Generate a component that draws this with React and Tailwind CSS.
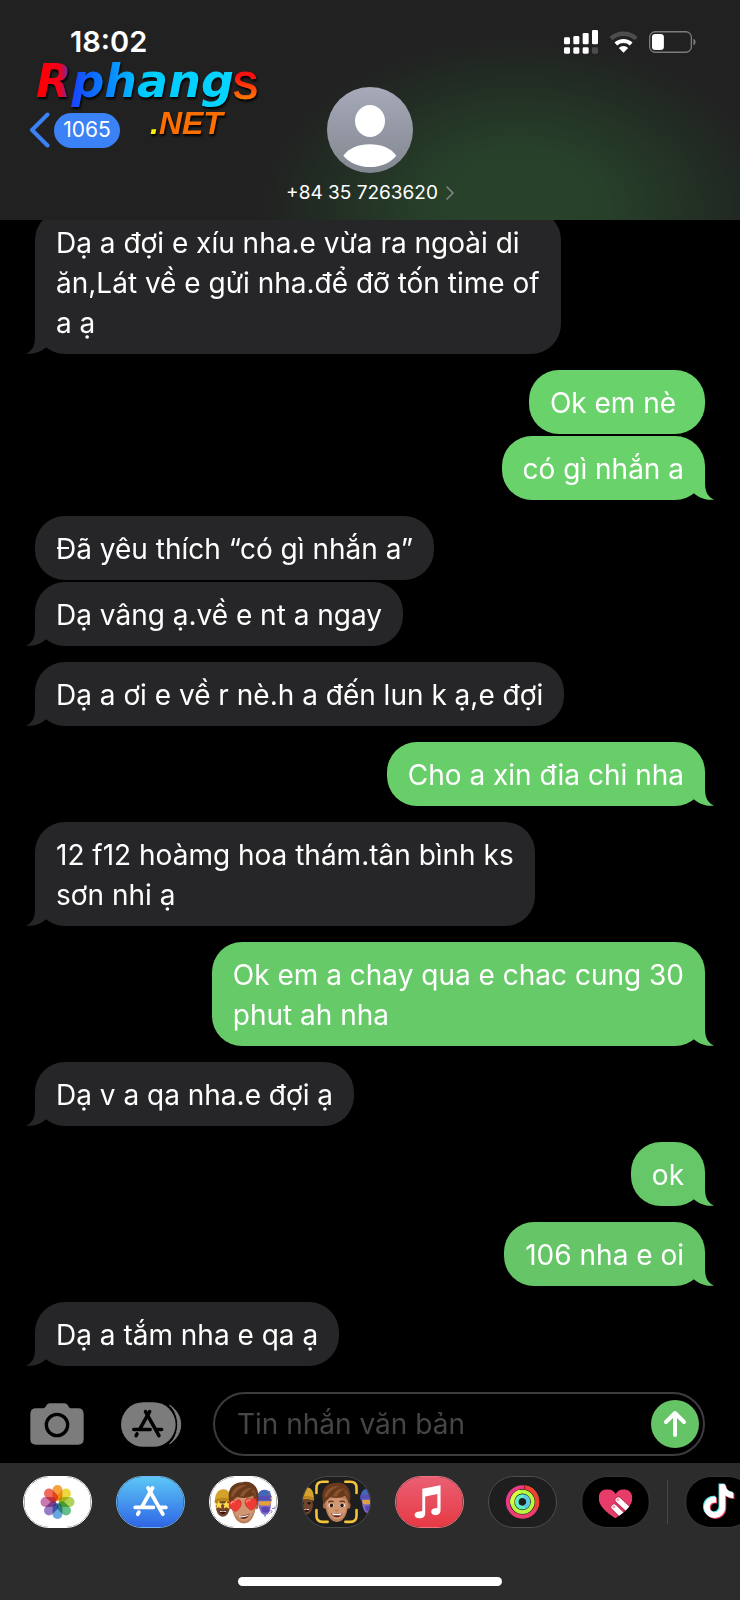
import React from "react";

const messages = [
  { from: "them", tail: true, text: "Dạ a đợi e xíu nha.e vừa ra ngoài di\năn,Lát về e gửi nha.để đỡ tốn time of\na ạ" },
  { from: "me", color: "#6ad26b", text: "Ok em nè " },
  { from: "me", color: "#6ad26b", tail: true, grouped: true, text: "có gì nhắn a" },
  { from: "them", text: "Đã yêu thích “có gì nhắn a”" },
  { from: "them", tail: true, grouped: true, text: "Dạ vâng ạ.về e nt a ngay" },
  { from: "them", tail: true, text: "Dạ a ơi e về r nè.h a đến lun k ạ,e đợi" },
  { from: "me", color: "#68ce6a", tail: true, text: "Cho a xin đia chi nha" },
  { from: "them", tail: true, text: "12 f12 hoàmg hoa thám.tân bình ks\nsơn nhi ạ" },
  { from: "me", color: "#67ca68", tail: true, text: "Ok em a chay qua e chac cung 30\nphut ah nha" },
  { from: "them", tail: true, text: "Dạ v a qa nha.e đợi ạ" },
  { from: "me", color: "#66c768", tail: true, text: "ok" },
  { from: "me", color: "#66c667", tail: true, text: "106 nha e oi" },
  { from: "them", tail: true, text: "Dạ a tắm nha e qa ạ" },
];

function Tail({ mine, color }) {
  return (
    <svg
      viewBox="0 0 30 30"
      className={
        mine
          ? "absolute bottom-0 -right-[9px] w-[30px] h-[30px] -scale-x-100"
          : "absolute bottom-0 -left-[9px] w-[30px] h-[30px]"
      }
      aria-hidden="true"
    >
      <path d="M9 0 V13 C9 22 6 27 0 29.500 C8 31 16 27 20.500 23 L30 10 V0 Z" fill={color} />
    </svg>
  );
}

function Bubble({ from, text, tail, grouped, color = "#262628" }) {
  const mine = from === "me";
  return (
    <li className={(mine ? "flex justify-end " : "flex justify-start ") + (grouped ? "mt-0.5" : "mt-4 first:mt-0")}>
      <div
        className="relative rounded-[30px] px-[21px] pt-[13px] pb-[11px] text-[28px] leading-10 text-white whitespace-pre"
        style={{ backgroundColor: color }}
      >
        {tail && <Tail mine={mine} color={color} />}
        <p className="relative">{text}</p>
      </div>
    </li>
  );
}

function StatusIcons() {
  return (
    <div className="flex items-center gap-[11px]">
      <svg viewBox="0 0 102 72" className="w-[34px] h-6" aria-label="Signal">
        <g fill="#fff">
          <rect x="0" y="22" width="18" height="21" rx="4" />
          <rect x="28" y="18" width="18" height="25" rx="4" />
          <rect x="56" y="9" width="18" height="34" rx="4" />
          <rect x="84" y="0" width="18" height="43" rx="4" />
          <rect x="0" y="52" width="18" height="19" rx="4" />
          <rect x="28" y="52" width="18" height="19" rx="4" />
          <rect x="56" y="52" width="18" height="19" rx="4" />
        </g>
        <rect x="84" y="52" width="18" height="19" rx="4" fill="#4d4d4d" />
      </svg>
      <svg viewBox="0 0 86 66" className="w-[29px] h-[22px]" fill="none" aria-label="Wi-Fi">
        <path d="M5 23 A56 56 0 0 1 81 23" stroke="#4d4d4d" strokeWidth="13" />
        <path d="M20 39 A34 34 0 0 1 66 39" stroke="#fff" strokeWidth="12" />
        <path d="M43 65 L29 51 A20 20 0 0 1 57 51 Z" fill="#fff" />
      </svg>
      <svg viewBox="0 0 142 66" className="w-[47px] h-[22px]" aria-label="Battery">
        <rect x="2" y="2" width="126" height="62" rx="17" fill="none" stroke="#7c7c7c" strokeWidth="4" />
        <rect x="9" y="9" width="36" height="48" rx="10" fill="#fff" />
        <path d="M134 23 C143 26 143 40 134 43 Z" fill="#7c7c7c" />
      </svg>
    </div>
  );
}

function SiteLogo() {
  return (
    <svg viewBox="0 0 230 84" className="absolute left-9 top-14 w-[230px] h-[84px] overflow-visible" aria-label="Rphangs.NET">
      <defs>
        <linearGradient id="logoWord" x1="0" x2="198" y1="0" y2="0" gradientUnits="userSpaceOnUse">
          <stop offset="0" stopColor="#ff0000" />
          <stop offset="0.12" stopColor="#f5001a" />
          <stop offset="0.19" stopColor="#1747ff" />
          <stop offset="0.35" stopColor="#0a80ff" />
          <stop offset="0.55" stopColor="#00ccff" />
          <stop offset="1" stopColor="#05d5ff" />
        </linearGradient>
        <linearGradient id="logoS" x1="0" x2="0" y1="14" y2="46" gradientUnits="userSpaceOnUse">
          <stop offset="0.2" stopColor="#ff1010" />
          <stop offset="1" stopColor="#ff8800" />
        </linearGradient>
      </defs>
      <g style={{ filter: "drop-shadow(1px 2px 1px #000)" }}>
        <text x="0" y="41" fontFamily="DejaVu Sans" fontWeight="700" fontStyle="italic" fontSize="46" fill="url(#logoWord)">
          Rphang
        </text>
        <text x="197" y="43" fontFamily="Liberation Sans" fontSize="50" fill="url(#logoS)" stroke="url(#logoS)">
          s
        </text>
        <text x="114" y="78" fontFamily="Liberation Sans" fontWeight="700" fontStyle="italic" fontSize="32" fill="#ff6f00">
          <tspan fill="#ffee00">.</tspan>NET
        </text>
      </g>
    </svg>
  );
}

function Header() {
  return (
    <header className="relative z-10 bg-[#212121] bg-[radial-gradient(ellipse_260px_170px_at_70%_94%,#28422a_0%,#27402a_35%,#222e24_72%,#212121_100%)]">
      <div className="flex h-[60px] items-center justify-between pl-[70px] pr-11 pt-6">
        <time className="text-[29px] leading-9 font-semibold">18:02</time>
        <StatusIcons />
      </div>
      <div className="grid grid-cols-[1fr_auto_1fr] pt-[27px]">
        <button className="flex h-[86px] items-center gap-1 justify-self-start pl-[29px]" aria-label="Back, 1065 unread">
          <svg viewBox="0 0 21 36" className="w-[21px] h-9" fill="none" stroke="#3b82f7" strokeWidth="4" strokeLinecap="round" strokeLinejoin="round">
            <path d="M18.500 2.500 L3 18 L18.500 33.500" />
          </svg>
          <span className="flex h-[35px] w-[66px] items-center justify-center rounded-full bg-[#3b82f7] text-[21px]">1065</span>
        </button>
        <svg viewBox="0 0 258 258" className="w-[86px] h-[86px] justify-self-center" aria-hidden="true">
          <defs>
            <linearGradient id="avatarBg" x1="0" x2="0" y1="0" y2="1">
              <stop offset="0" stopColor="#a6aab9" />
              <stop offset="1" stopColor="#838790" />
            </linearGradient>
          </defs>
          <circle cx="129" cy="129" r="129" fill="url(#avatarBg)" />
          <ellipse cx="129" cy="102" rx="45" ry="48" fill="#fff" />
          <path d="M49 206 C66 183 95 172 129 172 C163 172 191 183 208 206 C190 227 163 240 129 240 C95 240 67 227 49 206 Z" fill="#fff" />
        </svg>
        <button className="col-span-3 mt-1.5 flex h-7 items-center justify-center gap-2 justify-self-center text-[19px] leading-7">
          +84 35 7263620
          <svg viewBox="0 0 8 14" className="w-2 h-3.5" fill="none" stroke="#85898f" strokeWidth="1.500" strokeLinecap="round">
            <path d="M1 1 L7 7 L1 13" />
          </svg>
        </button>
      </div>
      <div className="h-[13px]" />
      <SiteLogo />
    </header>
  );
}

function AppStoreStrokes({ color, transform }) {
  return (
    <g stroke={color} strokeWidth="12" strokeLinecap="round" fill="none" transform={transform}>
      <path d="M60 5 L28 62" />
      <path d="M17 81 L14 87" />
      <path d="M46 5 L92 87" />
      <path d="M6 66 H62" />
      <path d="M85 66 H101" />
    </g>
  );
}

const petals = ["#f79a2c", "#ecd52f", "#a8ce4b", "#59b87f", "#5a9fdc", "#8f72c1", "#c56da9", "#ec5f50"];

function PhotosIcon() {
  return (
    <svg viewBox="0 0 207 156" className="h-full w-full">
      <rect width="207" height="156" fill="#fff" />
      <g style={{ isolation: "isolate" }}>
        {petals.map((fill, i) => (
          <rect
            key={fill}
            x="88"
            y="25"
            width="31"
            height="49"
            rx="15.500"
            fill={fill}
            fillOpacity="0.92"
            transform={`rotate(${i * 45} 103.500 78)`}
            style={{ mixBlendMode: "multiply" }}
          />
        ))}
      </g>
    </svg>
  );
}

function StoreIcon() {
  return (
    <svg viewBox="0 0 207 156" className="h-full w-full">
      <defs>
        <linearGradient id="storeBg" x1="0" x2="0" y1="0" y2="1">
          <stop offset="0" stopColor="#5cc6f5" />
          <stop offset="1" stopColor="#2f66e6" />
        </linearGradient>
      </defs>
      <rect width="207" height="156" fill="url(#storeBg)" />
      <AppStoreStrokes color="#fff" transform="translate(50 29)" />
    </svg>
  );
}

function HatHead({ transform, stars }) {
  return (
    <g transform={transform}>
      <ellipse cx="26" cy="54" rx="22" ry="32" fill="#70452c" />
      <path d="M1 44 C0 12 12 0 28 0 C44 0 52 14 51 42 C34 34 16 36 1 44 Z" fill="#d5a32c" />
      <path d="M1 44 C14 34 38 32 51 42 L51 32 C36 24 14 26 1 34 Z" fill="#b98519" />
      {stars ? (
        <g fill="#ffd84a">
          <path d="M13 36 l4 8 9 1 -6 6 2 9 -9 -4 -8 4 2 -9 -6 -6 8 -1 Z" />
          <path d="M37 36 l4 8 9 1 -6 6 2 9 -9 -4 -8 4 2 -9 -6 -6 8 -1 Z" />
        </g>
      ) : (
        <g fill="#1d130e">
          <ellipse cx="15" cy="50" rx="5" ry="4" />
          <ellipse cx="36" cy="50" rx="5" ry="4" />
        </g>
      )}
      <path d="M14 66 C22 69 32 69 38 66 C36 82 17 82 14 66 Z" fill="#3b130e" />
      <path d="M16 67 C24 70 30 70 37 67 L35 71 H18 Z" fill="#fff" />
    </g>
  );
}

function WizardHead({ transform }) {
  return (
    <g transform={transform}>
      <path d="M3 30 C6 64 14 78 26 78 C38 78 45 62 45 30 Z" fill="#7c68c8" />
      <path d="M0 34 C0 10 10 0 24 0 C40 0 46 12 47 34 Z" fill="#4466b6" />
      <path d="M0 20 H46 V32 H0 Z" fill="#5b4bb5" />
      <path d="M5 36 H45 L42 49 H9 Z" fill="#e4a03b" />
      <path d="M14 56 C22 52 32 52 40 56 L38 70 H18 Z" fill="#5c45ae" />
    </g>
  );
}

function BoyHead({ hearts }) {
  return (
    <g>
      <ellipse cx="65" cy="90" rx="6" ry="11" fill="#b06a49" />
      <ellipse cx="144" cy="90" rx="6" ry="11" fill="#b06a49" />
      <path d="M65 60 C63 104 76 145 105 145 C134 145 145 104 143 60 C140 34 68 34 65 60 Z" fill="#bd7f5a" />
      <path d="M71 78 C70 110 83 136 105 137 C127 136 138 110 137 78 C130 60 80 60 71 78 Z" fill="#d19770" />
      <path d="M62 86 C48 46 64 16 100 16 C138 8 160 42 146 88 C143 76 138 66 132 58 C118 66 100 68 84 62 C74 68 68 76 62 86 Z" fill="#69391b" />
      <path d="M64 62 C68 36 90 22 114 26 C96 32 80 44 72 62 Z M92 60 C98 44 112 32 130 34 C118 42 108 50 104 61 Z" fill="#89532f" />
      <path d="M134 36 C142 46 145 58 144 70 C140 58 134 50 128 46 Z" fill="#7d4926" />
      {hearts ? (
        <g>
          <path d="M86 122 C98 122 112 120 122 114 C122 132 92 136 86 122 Z" fill="#581715" />
          <path d="M88 122 C98 123 111 121 121 116 L119 121 C110 126 97 127 90 126 Z" fill="#fff" />
          <g fill="#ee3b35" stroke="#c72822" strokeWidth="1.500">
            <path d="M79 108 C64 101 56 89 61 78 C65 70 75 71 79 78 C83 69 93 69 96 77 C99 89 91 101 79 108 Z" />
            <path d="M128 104 C113 97 105 84 109 73 C113 64 123 66 127 73 C131 64 142 65 145 73 C147 85 140 96 128 104 Z" />
          </g>
          <path d="M65 83 C66 77 71 75 74 79 M113 78 C115 71 120 70 123 74" fill="none" stroke="#ff8f88" strokeWidth="4" strokeLinecap="round" />
        </g>
      ) : (
        <g>
          <path d="M76 80 C82 75 88 75 94 78 M114 78 C121 75 127 75 133 80" fill="none" stroke="#5d3219" strokeWidth="4" />
          <ellipse cx="86" cy="90" rx="9" ry="6" fill="#fff" />
          <ellipse cx="123" cy="90" rx="9" ry="6" fill="#fff" />
          <circle cx="87" cy="90" r="6" fill="#2b1a14" />
          <circle cx="122" cy="90" r="6" fill="#2b1a14" />
          <path d="M99 106 C103 109 107 109 111 106" fill="none" stroke="#a8653f" strokeWidth="3" />
          <path d="M86 115 C97 119 113 119 124 115 C120 134 90 134 86 115 Z" fill="#66211d" />
          <path d="M88 116 C98 119 112 119 122 116 L118 123 H92 Z" fill="#fff" />
        </g>
      )}
    </g>
  );
}

function StickersIcon() {
  return (
    <svg viewBox="0 0 207 156" className="h-full w-full">
      <rect width="207" height="156" fill="#fff" />
      <HatHead stars transform="translate(13 38)" />
      <WizardHead transform="translate(145 40)" />
      <path d="M184 108 C192 98 196 112 188 112 M192 98 H202 V92" fill="none" stroke="#8b6fd6" strokeWidth="3" />
      <g>
        <rect x="182" y="44" width="5" height="5" fill="#4a7bf0" />
        <rect x="188" y="64" width="6" height="6" fill="#ffd23d" />
        <rect x="180" y="52" width="4" height="4" fill="#ef5350" />
        <rect x="168" y="118" width="5" height="5" fill="#4a7bf0" />
        <rect x="182" y="112" width="4" height="4" fill="#ffb03d" />
      </g>
      <BoyHead hearts />
    </svg>
  );
}

function MemojiIcon() {
  return (
    <svg viewBox="0 0 207 156" className="h-full w-full">
      <rect width="207" height="156" fill="#1e1e1e" />
      <HatHead transform="translate(-18 32)" />
      <WizardHead transform="translate(178 36)" />
      <rect x="36" y="8" width="138" height="138" rx="20" fill="#1e1e1e" />
      <g transform="translate(6 4) scale(0.94)">
        <BoyHead />
      </g>
      <g fill="none" stroke="#f4c53b" strokeWidth="8" strokeLinecap="round">
        <path d="M41 50 V34 Q41 15 60 15 H76" />
        <path d="M131 15 H147 Q166 15 166 34 V50" />
        <path d="M41 103 V121 Q41 140 60 140 H76" />
        <path d="M131 140 H147 Q166 140 166 121 V103" />
      </g>
    </svg>
  );
}

function MusicIcon() {
  return (
    <svg viewBox="0 0 207 156" className="h-full w-full">
      <defs>
        <linearGradient id="musicBg" x1="0" x2="0" y1="0" y2="1">
          <stop offset="0" stopColor="#ea5f73" />
          <stop offset="1" stopColor="#e63a44" />
        </linearGradient>
      </defs>
      <rect width="207" height="156" fill="url(#musicBg)" />
      <path d="M81 37 L138 26 V104 C138 114 131 119 122 119 C113 119 108 114 109 108 C110 99 118 98 128 97 V53 L90 61 V114 C90 124 83 129 72 129 C62 129 57 124 57 118 C58 108 68 108 81 106 Z" fill="#fff" />
    </svg>
  );
}

function FitnessIcon() {
  return (
    <svg viewBox="0 0 207 156" className="h-full w-full">
      <rect width="207" height="156" fill="#1e1e1e" />
      <g fill="none" strokeWidth="12">
        <circle cx="103.500" cy="77.500" r="46" stroke="#e93a86" />
        <path d="M110 32 A46 46 0 0 1 144 100" stroke="#f0432f" />
        <path d="M144 100 A46 46 0 0 1 70 109" stroke="#ec3f6d" />
        <circle cx="103.500" cy="77.500" r="32" stroke="#b9f83f" />
        <path d="M72 84 A32 32 0 0 1 96 46" stroke="#d7ff45" />
        <circle cx="103.500" cy="77.500" r="18" stroke="#63eec8" />
        <path d="M108 60 A18 18 0 0 1 110 94" stroke="#5ac8e6" />
      </g>
      <path d="M110 25 V40" stroke="#a31d2c" strokeWidth="4" />
    </svg>
  );
}

function TouchIcon() {
  return (
    <svg viewBox="0 0 207 156" className="h-full w-full">
      <defs>
        <clipPath id="heartClip">
          <path d="M103 129 C70 106 51 88 51 66 C51 48 63 38 78 38 C90 38 99 44 104 53 C109 44 118 38 130 38 C145 38 156 49 156 66 C156 88 136 106 103 129 Z" />
        </clipPath>
      </defs>
      <rect width="207" height="156" fill="#000" />
      <g clipPath="url(#heartClip)">
        <rect x="45" y="30" width="120" height="105" fill="#e83c6b" />
        <g stroke="#b82a50" strokeWidth="22" strokeLinecap="round">
          <path d="M112 72 L158 114" />
          <path d="M99 94 L136 130" />
        </g>
        <g stroke="#fff" strokeWidth="17" strokeLinecap="round">
          <path d="M112 72 L158 114" />
          <path d="M99 94 L136 130" />
        </g>
        <circle cx="111" cy="71" r="5" fill="#f5a3b8" />
        <circle cx="98" cy="93" r="5" fill="#f5a3b8" />
      </g>
    </svg>
  );
}

const note =
  "M448 209.900a210.100 210.100 0 0 1-122.800-39.300v178.800A162.600 162.600 0 1 1 185 188.300v89.900a74.600 74.600 0 1 0 52.200 71.200V0h88a121.200 121.200 0 0 0 1.900 22.200 122.200 122.200 0 0 0 53.900 80.200 121.400 121.400 0 0 0 67 20.100z";

function TikTokIcon() {
  return (
    <svg viewBox="0 0 207 156" className="h-full w-full">
      <rect width="207" height="156" fill="#000" />
      <path d={note} fill="#5ce5e4" transform="translate(52 20) scale(0.205)" />
      <path d={note} fill="#ea3e62" transform="translate(58 26) scale(0.205)" />
      <path d={note} fill="#fff" transform="translate(55 23) scale(0.205)" />
    </svg>
  );
}

const apps = [
  { name: "Photos", Icon: PhotosIcon, border: "border-white" },
  { name: "App Store", Icon: StoreIcon, border: "border-[#6fb4ee]" },
  { name: "Memoji Stickers", Icon: StickersIcon, border: "border-white" },
  { name: "Memoji", Icon: MemojiIcon, border: "border-[#4a4a4a]" },
  { name: "Music", Icon: MusicIcon, border: "border-[#ec7480]" },
  { name: "Fitness", Icon: FitnessIcon, border: "border-[#4f4f4f]" },
  { name: "Digital Touch", Icon: TouchIcon, border: "border-[#363636]" },
];

function AppButton({ name, Icon, border }) {
  return (
    <button
      aria-label={name}
      className={"h-[52px] w-[69px] shrink-0 overflow-hidden rounded-[26px] border " + border}
    >
      <Icon />
    </button>
  );
}

function Composer() {
  return (
    <form className="flex items-center gap-[31px] pb-[7px] pl-[30px] pr-[35px] pt-[26px]" onSubmit={(e) => e.preventDefault()}>
      <button type="button" aria-label="Camera" className="w-[60px] shrink-0">
        <svg viewBox="0 0 162 126" className="w-[54px] h-[42px]">
          <path d="M18 16 H40 C48 16 48 1 60 1 H103 C115 1 115 16 122 16 H144 Q161 16 161 33 V109 Q161 125 144 125 H18 Q1 125 1 109 V33 Q1 16 18 16 Z" fill="#7c7c7c" />
          <circle cx="81" cy="66" r="32" fill="none" stroke="#000" strokeWidth="10" />
        </svg>
      </button>
      <button type="button" aria-label="Apps" className="shrink-0">
        <svg viewBox="0 0 183 134" className="w-[61px] h-[45px]">
          <path d="M146 9 C190 38 190 96 146 125 C178 96 178 38 146 9 Z" fill="#7c7c7c" stroke="#7c7c7c" strokeWidth="3" />
          <rect width="164" height="134" rx="67" fill="#7c7c7c" />
          <AppStoreStrokes color="#000" transform="translate(33 24) scale(0.88)" />
        </svg>
      </button>
      <div className="flex h-16 min-w-0 flex-1 items-center rounded-full border-2 border-[#3c3c3e] pl-[22px] pr-1">
        <input
          aria-label="Tin nhắn văn bản"
          placeholder="Tin nhắn văn bản"
          className="min-w-0 flex-1 bg-transparent text-[28px] leading-10 text-white outline-none placeholder:text-[#464648]"
        />
        <button aria-label="Send" className="flex h-12 w-12 shrink-0 items-center justify-center rounded-full bg-[#65c466]">
          <svg viewBox="0 0 24 28" className="w-6 h-7" fill="none" stroke="#fff" strokeWidth="4" strokeLinecap="round" strokeLinejoin="round">
            <path d="M12 25 V3 M3 12 L12 3 L21 12" />
          </svg>
        </button>
      </div>
    </form>
  );
}

export default function App() {
  return (
    <div className="flex min-h-screen flex-col overflow-hidden bg-black font-['Inter',sans-serif] text-white">
      <Header />
      <main className="-mt-2.5 flex-1">
        <ul className="px-[35px]">
          {messages.map((m, i) => (
            <Bubble key={i} {...m} />
          ))}
        </ul>
      </main>
      <Composer />
      <footer className="bg-[#2c2c2c] pb-3.5 pt-[13px]">
        <nav className="flex items-center overflow-hidden pl-[23px]" aria-label="iMessage apps">
          <div className="flex gap-6">
            {apps.map((app) => (
              <AppButton key={app.name} {...app} />
            ))}
          </div>
          <div className="mx-[17px] h-11 w-px shrink-0 bg-[#48484a]" />
          <AppButton name="TikTok" Icon={TikTokIcon} border="border-[#363636]" />
        </nav>
        <div className="mx-auto mt-[49px] h-[9px] w-[264px] rounded-full bg-white" />
      </footer>
    </div>
  );
}
